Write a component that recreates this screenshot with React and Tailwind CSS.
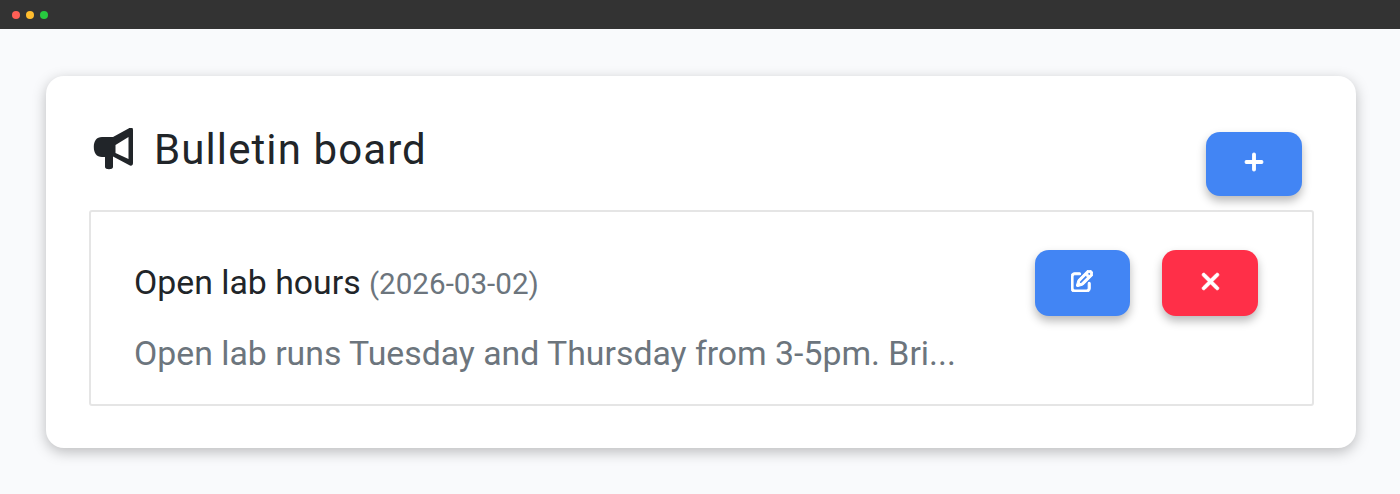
import React from "react";
import { FaRegPenToSquare, FaPlus, FaXmark } from "react-icons/fa6";

const shadow = "shadow-[0_5px_10px_rgba(0,0,0,0.28)]";

function Bullhorn() {
  return (
    <svg viewBox="5 6 42 44" className="h-[44px] w-[42px]" fill="currentColor" aria-hidden="true">
      <path
        fillRule="evenodd"
        d="M45 8 C45 5.5 43 4.5 41 6.2 L25 15 L14 15 C8.5 15 5.8 19 5.8 25 C5.8 31 8.5 35 14 35 L17 35 L17 45 C17 48 25 48 25 45 L25 34.5 L41 43 C43 44.5 45 43.5 45 41 Z M27.5 23 L40.5 15 L40.5 37 L27.5 31 Z"
      />
    </svg>
  );
}

export default function App() {
  return (
    <div className="h-[494px] w-[1400px] overflow-hidden bg-[#f9fafc] font-['Roboto',sans-serif]">
      <div className="flex h-[29px] items-center gap-[6px] bg-[#333333] pl-[12px]">
        <span className="h-[8px] w-[8px] rounded-full bg-[#ff5f56]" />
        <span className="h-[8px] w-[8px] rounded-full bg-[#ffbd2e]" />
        <span className="h-[8px] w-[8px] rounded-full bg-[#27c93f]" />
      </div>
      <div className="px-[46px] pt-[47px]">
        <div className="h-[372px] w-[1310px] rounded-[18px] bg-white pl-[43px] pr-[42px] pt-[40px] shadow-[0_4px_14px_rgba(0,0,0,0.25)]">
          <div className="flex h-[94px] items-start justify-between pl-[4px] pr-[12px]">
            <h1 className="flex items-center gap-[19px] pt-[7px] text-[42px] leading-[54px] font-normal tracking-[1.1px] text-[#212529]">
              <Bullhorn />
              <span>Bulletin board</span>
            </h1>
            <button className={`mt-[16px] flex h-[64px] w-[96px] items-center justify-center rounded-[14px] bg-[#4285f4] pb-[4px] text-white ${shadow}`}>
              <FaPlus className="h-[22px] w-[22px]" stroke="currentColor" strokeWidth={24} />
            </button>
          </div>
          <div className="flex h-[196px] items-start justify-between rounded-[3px] border-2 border-[#e5e5e5] pl-[43px] pr-[54px] pt-[38px]">
            <div>
              <div className="text-[33.8px] leading-[66px] text-[#212529]">
                Open lab hours <span className="text-[29.6px] text-[#6c757d]">(2026-03-02)</span>
              </div>
              <p className="mt-[12px] text-[33.8px] leading-[50px] text-[#6c757d]">Open lab runs Tuesday and Thursday from 3-5pm. Bri...</p>
            </div>
            <div className="flex gap-[32px]">
              <button className={`flex h-[66px] w-[95px] items-center justify-center rounded-[14px] bg-[#4285f4] pb-[4px] pr-[2px] text-white ${shadow}`}>
                <FaRegPenToSquare className="h-[22px] w-[22px]" stroke="currentColor" strokeWidth={24} />
              </button>
              <button className={`flex h-[66px] w-[96px] items-center justify-center rounded-[14px] bg-[#ff2f48] pb-[4px] text-white ${shadow}`}>
                <FaXmark className="h-[27px] w-[27px]" stroke="currentColor" strokeWidth={12} />
              </button>
            </div>
          </div>
        </div>
      </div>
    </div>
  );
}
